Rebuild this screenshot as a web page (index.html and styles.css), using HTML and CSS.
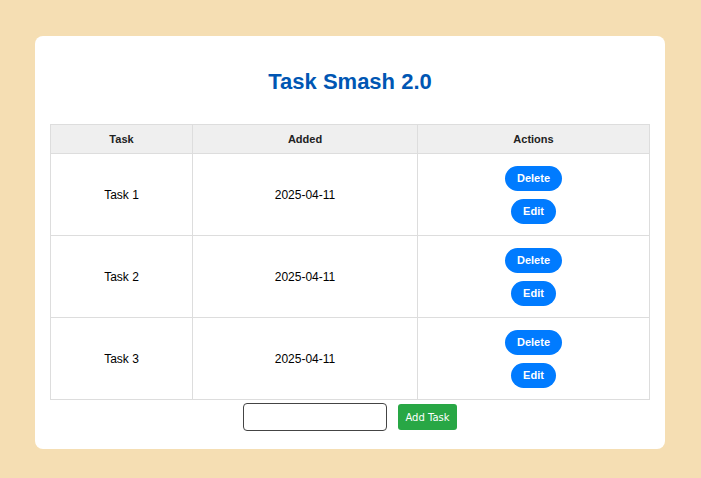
FILE: index.html
```html
<!DOCTYPE html>
<html>
<head>
<meta charset="utf-8">
<link rel="stylesheet" href="styles.css">
</head>
<body>
<div class="card">
  <h1 class="title">Task Smash 2.0</h1>
  <table class="tasks">
    <thead>
      <tr><th class="c1">Task</th><th class="c2">Added</th><th class="c3">Actions</th></tr>
    </thead>
    <tbody>
      <tr><td>Task 1</td><td>2025-04-11</td><td><div class="actions"><button class="btn">Delete</button><button class="btn">Edit</button></div></td></tr>
      <tr><td>Task 2</td><td>2025-04-11</td><td><div class="actions"><button class="btn">Delete</button><button class="btn">Edit</button></div></td></tr>
      <tr><td>Task 3</td><td>2025-04-11</td><td><div class="actions"><button class="btn">Delete</button><button class="btn">Edit</button></div></td></tr>
    </tbody>
  </table>
  <div class="add-row">
    <input class="task-input" type="text">
    <button class="add-btn">Add Task</button>
  </div>
</div>
</body>
</html>
```
FILE: styles.css
```css
html, body { margin: 0; padding: 0; }
body {
  background: #f5deb3;
  font-family: "Liberation Sans", Arial, sans-serif;
  padding-top: 36px;
  padding-right: 1px;
}
.card {
  width: 600px;
  margin: 0 auto;
  background: #fff;
  border-radius: 8px;
  padding: 0 15px 18px;
  box-sizing: content-box;
}
.title {
  margin: 0;
  padding: 31px 0 27px;
  text-align: center;
  color: #0056b3;
  font-size: 22px;
  line-height: 30px;
  font-weight: bold;
}
.tasks {
  width: 600px;
  border-collapse: collapse;
  border: 1px solid #ddd;
}
.tasks th, .tasks td {
  border: 1px solid #ddd;
  text-align: center;
  color: #222;
}
.tasks th {
  background: #efefef;
  height: 28px;
  padding: 0;
  font-size: 11px;
  font-weight: bold;
}
.c1 { width: 141px; }
.c2 { width: 224px; }
.tasks td {
  height: 81px;
  padding: 0;
  font-size: 12px;
  color: #000;
}
.actions {
  display: flex;
  flex-direction: column;
  align-items: center;
  gap: 8px;
}
.btn {
  background: #007bff;
  color: #fff;
  border: none;
  border-radius: 13px;
  height: 25px;
  padding: 0 12px;
  font-family: "Liberation Sans", Arial, sans-serif;
  font-size: 11px;
  font-weight: bold;
}
.add-row {
  display: flex;
  justify-content: center;
  align-items: center;
  gap: 11px;
  margin-top: 3px;
}
.task-input {
  width: 144px;
  height: 28px;
  box-sizing: border-box;
  border: 1px solid #444;
  border-radius: 4px;
  margin: 0;
}
.add-btn {
  background: #28a745;
  color: #fff;
  border: none;
  border-radius: 3px;
  height: 26px;
  padding: 0 7px;
  font-family: "DejaVu Sans", sans-serif;
  font-size: 10px;
}
```
